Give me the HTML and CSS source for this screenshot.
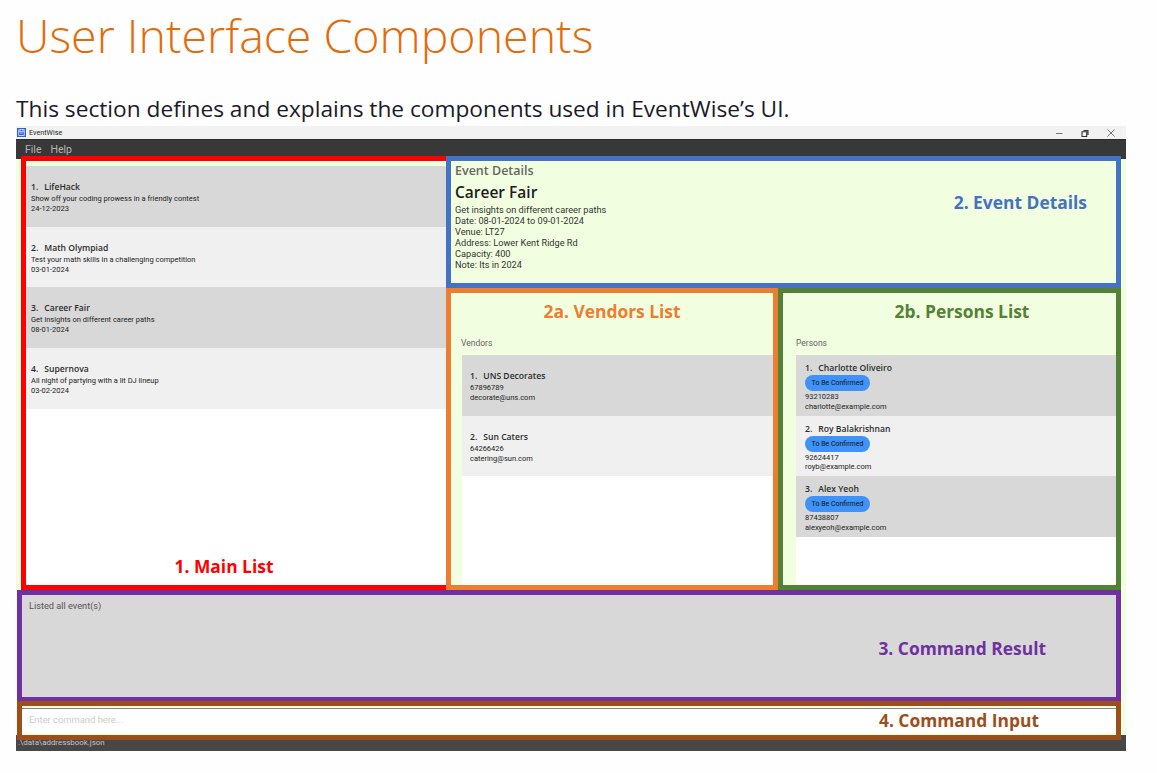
FILE: index.html
```html
<!DOCTYPE html>
<html lang="en">

<head>
    <meta charset="UTF-8">
    <title>User Interface Components</title>
    <link rel="stylesheet" href="styles.css">
</head>

<body>
    <h1 class="page-title">User Interface Components</h1>
    <p class="page-intro">This section defines and explains the components used in EventWise’s UI.</p>

    <div class="window">
        <div class="titlebar">
            <svg class="app-icon" viewBox="0 0 10 10">
                <rect width="10" height="10" fill="#2f5fd8"/>
                <rect x="2" y="2" width="6" height="6.2" fill="none" stroke="#fff" stroke-width="0.8"/>
                <path d="M2 4h6M3.5 1v2M6.5 1v2M3.5 5.6h3" stroke="#fff" stroke-width="0.7"/>
            </svg>
            <span class="app-name">EventWise</span>
            <div class="controls">
                <svg viewBox="0 0 10 10"><path d="M2 5.5h6.5" stroke="#777" stroke-width="1"/></svg>
                <svg viewBox="0 0 10 10"><path d="M3.5 2.5h4.5v4.5M2 3.8h4.7v4.7H2z" fill="none" stroke="#333" stroke-width="1.1"/></svg>
                <svg viewBox="0 0 10 10"><path d="M1.5 1.5l7 7M8.500 1.500l-7 7" stroke="#555" stroke-width="0.8"/></svg>
            </div>
        </div>
        <div class="menubar">
            <span>File</span>
            <span>Help</span>
        </div>

        <div class="content">
            <div class="split">
                <!-- main list -->
                <div class="main-list">
                    <div class="card">
                        <div class="card-name"><span class="num">1.</span>LifeHack</div>
                        <div>Show off your coding prowess in a friendly contest</div>
                        <div>24-12-2023</div>
                    </div>
                    <div class="card">
                        <div class="card-name"><span class="num">2.</span>Math Olympiad</div>
                        <div>Test your math skills in a challenging competition</div>
                        <div>03-01-2024</div>
                    </div>
                    <div class="card">
                        <div class="card-name"><span class="num">3.</span>Career Fair</div>
                        <div>Get insights on different career paths</div>
                        <div>08-01-2024</div>
                    </div>
                    <div class="card">
                        <div class="card-name"><span class="num">4.</span>Supernova</div>
                        <div>All night of partying with a lit DJ lineup</div>
                        <div>03-02-2024</div>
                    </div>
                </div>

                <div class="side">
                    <div class="details">
                        <div class="details-head">Event Details</div>
                        <div class="details-name">Career Fair</div>
                        <div>Get insights on different career paths</div>
                        <div>Date: 08-01-2024 to 09-01-2024</div>
                        <div>Venue: LT27</div>
                        <div>Address: Lower Kent Ridge Rd</div>
                        <div>Capacity: 400</div>
                        <div>Note: Its in 2024</div>
                    </div>
                    <div class="lists">
                        <div class="sub-panel vendors">
                            <div class="sub-head">Vendors</div>
                            <div class="sub-list">
                                <div class="card">
                                    <div class="card-name"><span class="num">1.</span>UNS Decorates</div>
                                    <div>67896789</div>
                                    <div>decorate@uns.com</div>
                                </div>
                                <div class="card">
                                    <div class="card-name"><span class="num">2.</span>Sun Caters</div>
                                    <div>64266426</div>
                                    <div>catering@sun.com</div>
                                </div>
                            </div>
                        </div>
                        <div class="sub-panel persons">
                            <div class="sub-head">Persons</div>
                            <div class="sub-list">
                                <div class="card person">
                                    <div class="card-name"><span class="num">1.</span>Charlotte Oliveiro</div>
                                    <span class="pill">To Be Confirmed</span>
                                    <div>93210283</div>
                                    <div>charlotte@example.com</div>
                                </div>
                                <div class="card person">
                                    <div class="card-name"><span class="num">2.</span>Roy Balakrishnan</div>
                                    <span class="pill">To Be Confirmed</span>
                                    <div>92624417</div>
                                    <div>royb@example.com</div>
                                </div>
                                <div class="card person">
                                    <div class="card-name"><span class="num">3.</span>Alex Yeoh</div>
                                    <span class="pill">To Be Confirmed</span>
                                    <div>87438807</div>
                                    <div>alexyeoh@example.com</div>
                                </div>
                            </div>
                        </div>
                    </div>
                </div>
            </div>

            <div class="result">Listed all event(s)</div>
            <div class="command">Enter command here...</div>
        </div>

        <div class="statusbar">.\data\addressbook.json</div>

        <!-- annotation frames drawn over the screenshot -->
        <div class="frame frame-main">1. Main List</div>
        <div class="frame frame-details">2. Event Details</div>
        <div class="frame frame-vendors">2a. Vendors List</div>
        <div class="frame frame-persons">2b. Persons List</div>
        <div class="frame frame-result">3. Command Result</div>
        <div class="frame frame-command">4. Command Input</div>
    </div>
</body>

</html>
```

FILE: styles.css
```css
* {
    padding: 0;
    margin: 0;
    box-sizing: border-box;
}

body {
    background-color: #fefefe;
    font-family: "Open Sans", "Noto Sans", sans-serif;
    padding-left: 16px;
}

.page-title {
    height: 96px;
    font-size: 46.5px;
    line-height: 70px;
    font-weight: 300;
    color: #e36c0a;
}

.page-intro {
    height: 30px;
    font-size: 22.7px;
    line-height: 26px;
    color: #1a1a2a;
}

.window {
    position: relative;
    width: 1110px;
    height: 625px;
    font-family: Roboto, "Open Sans", sans-serif;
    font-size: 7.5px;
    line-height: 10px;
    color: #222;
}

/* title bar */
.titlebar {
    display: flex;
    align-items: center;
    height: 13px;
    background-color: #f2f2f2;
    padding-left: 1px;
}

.app-icon {
    width: 9px;
    height: 9px;
}

.app-name {
    margin-left: 3px;
    font-size: 7.2px;
}

.controls {
    display: flex;
    gap: 16px;
    margin-left: auto;
    margin-right: 10px;
}

.controls svg {
    width: 10px;
    height: 10px;
}

.menubar {
    display: flex;
    gap: 9px;
    height: 20px;
    padding: 3px 0 0 9px;
    background-color: #383838;
    border-top: 1px solid #2c2c2c;
    color: #b5b5b5;
    font-size: 10.5px;
    line-height: 14px;
}

/* content */
.content {
    height: 576px;
    background-color: #f1ffe0;
}

.split {
    display: flex;
    height: 426px;
    padding-left: 10px;
}

.main-list {
    width: 420px;
    margin-top: 7px;
    background-color: #fff;
}

.card {
    height: 60.7px;
    padding: 15px 0 0 5px;
    background-color: #d8d8d8;
}

.card:nth-child(even) {
    background-color: #f0f0f0;
}

.card-name {
    margin-bottom: 1px;
    font-family: "Open Sans", sans-serif;
    font-size: 8.6px;
    line-height: 12px;
    font-weight: 600;
    color: #2c2c2c;
}

.num {
    margin-right: 6px;
}

.side {
    display: flex;
    flex-direction: column;
    width: 670px;
}

.details {
    height: 129px;
    padding: 3px 0 0 9px;
    line-height: 11px;
    font-size: 9.2px;
    color: #333;
}

.details-head {
    font-family: "Open Sans", sans-serif;
    font-size: 12.5px;
    line-height: 17px;
    font-weight: 600;
    color: #666;
}

.details-name {
    margin: 3px 0 0;
    font-family: "Open Sans", sans-serif;
    font-size: 15.5px;
    line-height: 21.5px;
    font-weight: 600;
    color: #1c1c1c;
}

.lists {
    display: flex;
    flex: 1;
}

.sub-panel {
    display: flex;
    flex-direction: column;
    padding-top: 49px;
}

.vendors {
    width: 332px;
    padding-left: 15px;
}

.vendors .sub-list {
    margin-left: 1px;
}

.persons {
    width: 338px;
    padding-left: 18px;
}

.sub-head {
    height: 18px;
    font-size: 8.5px;
    line-height: 12px;
    color: #666;
}

.sub-list {
    flex: 1;
    background-color: #fff;
}

.person {
    padding-top: 7px;
    padding-left: 9px;
    line-height: 9.5px;
}

.person .card-name {
    margin-bottom: 0;
}

.vendors .card {
    padding-left: 8px;
    padding-top: 15px;
}

.pill {
    display: block;
    width: 65px;
    height: 16px;
    margin: 1px 0;
    border-radius: 8px;
    background-color: #3e92f8;
    text-align: center;
    font-size: 7px;
    line-height: 16px;
    color: #111;
}

.result {
    height: 105px;
    margin: 10px 5px 0 6px;
    padding: 5px 0 0 7px;
    background-color: #d8d8d8;
    font-size: 9.2px;
    line-height: 12px;
    color: #555;
}

.command {
    height: 25px;
    margin: 8px 5px 0 6px;
    padding-left: 7px;
    background-color: #fff;
    border-top: 1px solid #888;
    font-size: 9.4px;
    line-height: 22px;
    color: #ccc;
}

.statusbar {
    height: 16px;
    padding-left: 2px;
    background-color: #474747;
    color: #c4c4c4;
    font-size: 7.9px;
    line-height: 15px;
}

/* annotation frames */
.frame {
    position: absolute;
    display: flex;
    justify-content: center;
    border: 5px solid;
    font-family: "Open Sans", sans-serif;
    font-size: 17.4px;
    line-height: 24px;
    font-weight: 700;
}

.frame-main {
    top: 30px;
    left: 5px;
    width: 425px;
    height: 434px;
    align-items: flex-end;
    padding: 0 24px 7px 0;
    border-color: #ff0000;
    border-right: 0;
    color: #ff0000;
}

.frame-details {
    top: 30px;
    left: 430px;
    width: 675px;
    height: 132px;
    justify-content: flex-end;
    padding: 29px 29px 0 0;
    border-color: #4472c4;
    color: #4472c4;
}

.frame-vendors {
    top: 162px;
    left: 430px;
    width: 332px;
    height: 302px;
    padding-top: 6px;
    border-color: #ed7d31;
    color: #ed7d31;
}

.frame-persons {
    top: 162px;
    left: 762px;
    width: 343px;
    height: 302px;
    padding: 6px 0 0 25px;
    border-color: #538135;
    color: #538135;
}

.frame-result {
    top: 464px;
    left: 1px;
    width: 1104px;
    height: 112px;
    justify-content: flex-end;
    padding: 41px 70px 0 0;
    border-color: #7030a0;
    color: #7030a0;
}

.frame-command {
    top: 575px;
    left: 1px;
    width: 1104px;
    height: 39px;
    justify-content: flex-end;
    padding: 2px 77px 0 0;
    border-color: #9c4f1a;
    color: #9c4f1a;
}
```
